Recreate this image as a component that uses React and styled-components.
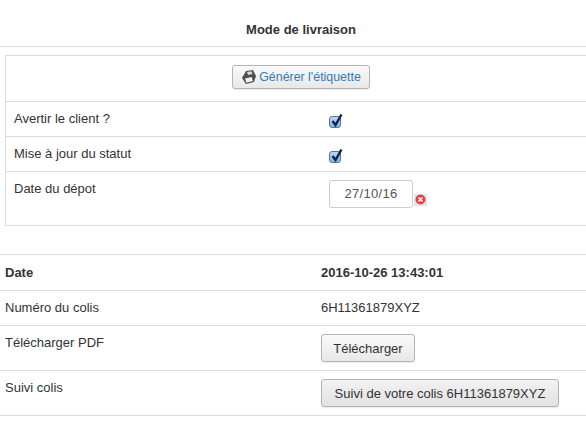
import React from 'react';
import styled, { createGlobalStyle } from 'styled-components';

const GlobalStyle = createGlobalStyle`
  html, body {
    margin: 0;
    padding: 0;
    background: #fff;
  }
  body {
    font-family: "Liberation Sans", Arial, sans-serif;
    font-size: 13px;
    color: #333;
  }
`;

const Page = styled.div`
  width: 586px;
  height: 422px;
  overflow: hidden;
`;

const Heading = styled.div`
  height: 47px;
  box-sizing: border-box;
  padding: 22px 0 0 16px;
  line-height: 16px;
  text-align: center;
  font-weight: 700;
  font-size: 13px;
  border-bottom: 1px solid #ddd;
`;

const Panel = styled.div`
  margin: 8px 0 28px 5px;
  border: 1px solid #ddd;
  border-right: 0;
  height: 171px;
  box-sizing: border-box;
`;

const ButtonRow = styled.div`
  height: 46px;
  box-sizing: border-box;
  border-bottom: 1px solid #ddd;
  padding: 9px 0 0 226px;
  display: flex;
`;

const Button = styled.button`
  box-sizing: border-box;
  display: inline-flex;
  align-items: center;
  justify-content: center;
  gap: ${(p) => (p.$link ? '2px' : '0')};
  width: ${(p) => p.$w}px;
  height: ${(p) => p.$h || 28}px;
  padding: 0;
  border: 1px solid #b4b4b4;
  border-radius: 3px;
  background: ${(p) => p.$bg || 'linear-gradient(#fafafa, #e8e8e8)'};
  box-shadow: 0 1px 1px rgba(0, 0, 0, 0.08);
  color: ${(p) => (p.$link ? '#337ab7' : '#333')};
  font-family: inherit;
  font-size: ${(p) => (p.$link ? '12.4px' : '13px')};
`;

const Row = styled.div`
  display: grid;
  grid-template-columns: ${(p) => p.$cols};
  height: ${(p) => p.$h}px;
  box-sizing: border-box;
  border-bottom: ${(p) => (p.$last ? '0' : '1px solid #ddd')};
  padding-left: ${(p) => p.$pad}px;
`;

const Cell = styled.div`
  padding-top: ${(p) => p.$top || 8}px;
  line-height: 18px;
  font-weight: ${(p) => (p.$bold ? 700 : 400)};
`;

const CheckBox = styled.span`
  position: relative;
  display: block;
  width: 12px;
  height: 12px;
  margin-top: 14px;
  box-sizing: border-box;
  border: 1px solid #5f7390;
  border-radius: 3px;
  background: linear-gradient(#bcd8f7, #7fb4ec);
`;

const Tick = styled.svg`
  position: absolute;
  left: 0;
  top: -5px;
  width: 14px;
  height: 16px;
`;

const DateWrap = styled.div`
  display: flex;
  align-items: flex-start;
  padding-top: 8px;
`;

const DateInput = styled.div`
  box-sizing: border-box;
  width: 84px;
  height: 28px;
  border: 1px solid #ccc;
  border-radius: 3px;
  text-align: center;
  line-height: 26px;
  letter-spacing: 0.3px;
  color: #555;
`;

const Clear = styled.svg`
  width: 13px;
  height: 13px;
  margin: 13px 0 0 1px;
`;

const TopRule = styled.div`
  border-top: 1px solid #ddd;
`;

function Check() {
  return (
    <CheckBox>
      <Tick viewBox="0 0 14 16">
        <path d="M2.5 9 L5.5 13 L11.5 2.5" fill="none" stroke="#0d2545" strokeWidth="2.4" />
      </Tick>
    </CheckBox>
  );
}

function DiskIcon() {
  return (
    <svg width="16" height="16" viewBox="0 0 16 16">
      <path d="M5 2 L12 1 L15 7 L13 13 L5 15 L1 9 Z" fill="#4f4f4f" />
      <path d="M6 3 L10.5 2.2 L11.5 5 L7 6 Z" fill="#d8d8d8" />
      <path d="M4 9.5 L10.5 8 L12 12 L5.5 13.8 Z" fill="#f0f0f0" />
    </svg>
  );
}

export default function App() {
  return (
    <Page>
      <GlobalStyle />
      <Heading>Mode de livraison</Heading>
      <Panel>
        <ButtonRow>
          <Button $link $w={138} $h={24}>
            <DiskIcon />
            Générer l'étiquette
          </Button>
        </ButtonRow>
        <Row $h={35} $pad={8} $cols="315px 1fr">
          <Cell>Avertir le client ?</Cell>
          <Check />
        </Row>
        <Row $h={35} $pad={8} $cols="315px 1fr">
          <Cell>Mise à jour du statut</Cell>
          <Check />
        </Row>
        <Row $h={53} $pad={8} $cols="315px 1fr" $last>
          <Cell>Date du dépot</Cell>
          <DateWrap>
            <DateInput>27/10/16</DateInput>
            <Clear viewBox="0 0 13 13">
              <rect x="0" y="1" width="13" height="12" fill="#e6e6e6" />
              <circle cx="6.5" cy="6.5" r="5" fill="#e8404a" />
              <path d="M4.5 4.5 L8.5 8.5 M8.5 4.5 L4.5 8.5" stroke="#fff" strokeWidth="1.6" />
            </Clear>
          </DateWrap>
        </Row>
      </Panel>
      <TopRule />
      <Row $h={36} $pad={5} $cols="316px 1fr">
        <Cell $top={9} $bold>Date</Cell>
        <Cell $top={9} $bold>2016-10-26 13:43:01</Cell>
      </Row>
      <Row $h={35} $pad={5} $cols="316px 1fr">
        <Cell>Numéro du colis</Cell>
        <Cell>6H11361879XYZ</Cell>
      </Row>
      <Row $h={45} $pad={5} $cols="316px 1fr">
        <Cell>Télécharger PDF</Cell>
        <Cell>
          <Button $w={94}>Télécharger</Button>
        </Cell>
      </Row>
      <Row $h={45} $pad={5} $cols="316px 1fr">
        <Cell>Suivi colis</Cell>
        <Cell>
          <Button $w={238} $bg="linear-gradient(#f2f2f2, #e2e2e2)">Suivi de votre colis 6H11361879XYZ</Button>
        </Cell>
      </Row>
    </Page>
  );
}
